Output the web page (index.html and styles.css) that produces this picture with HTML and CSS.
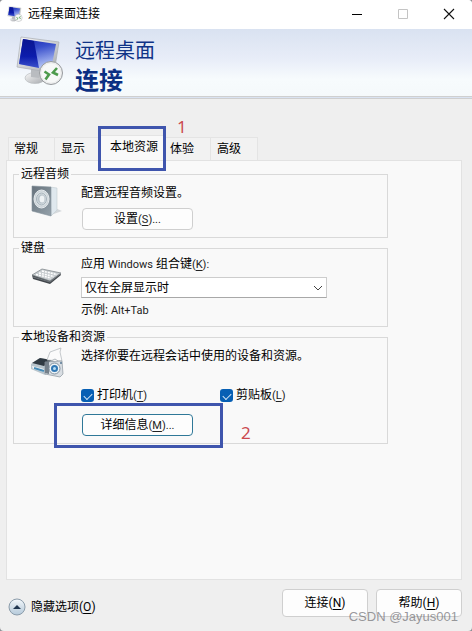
FILE: index.html
```html
<!DOCTYPE html>
<html lang="zh-CN">
<head>
<meta charset="utf-8">
<meta name="viewport" content="width=device-width, initial-scale=1">
<title>远程桌面连接</title>
<link rel="stylesheet" href="styles.css">
</head>
<body>
<svg class="defs" width="0" height="0" aria-hidden="true">
  <defs>
    <linearGradient id="screen" x1="0" y1="0" x2=".3" y2="1">
      <stop offset="0" stop-color="#1726b0"/><stop offset=".4" stop-color="#3a50cc"/>
      <stop offset="1" stop-color="#b4c4f6"/>
    </linearGradient>
    <linearGradient id="glare" x1="0" y1="0" x2="0" y2="1">
      <stop offset="0" stop-color="#0a1590"/><stop offset=".6" stop-color="#0c1cac"/>
      <stop offset="1" stop-color="#3c52cc"/>
    </linearGradient>
    <linearGradient id="metal" x1="0" y1="0" x2="1" y2="1">
      <stop offset="0" stop-color="#fafafa"/><stop offset="1" stop-color="#a5a8ac"/>
    </linearGradient>
    <linearGradient id="box" x1="0" y1="0" x2="1" y2="1">
      <stop offset="0" stop-color="#66727c"/><stop offset="1" stop-color="#94a1aa"/>
    </linearGradient>
    <radialGradient id="cone">
      <stop offset="0" stop-color="#f4f6f7"/><stop offset=".35" stop-color="#aebac2"/>
      <stop offset=".7" stop-color="#e3e8eb"/><stop offset="1" stop-color="#bcc6cc"/>
    </radialGradient>
    <linearGradient id="orb" x1="0" y1="0" x2="0" y2="1">
      <stop offset="0" stop-color="#f5f9fc"/><stop offset=".5" stop-color="#d2dee8"/>
      <stop offset="1" stop-color="#b5cadb"/>
    </linearGradient>
    <symbol id="remote" viewBox="0 0 48 50">
      <ellipse cx="19" cy="42" rx="10" ry="5.5" fill="url(#metal)" stroke="#b4b7bb" stroke-width=".6"/>
      <path d="M15 32l9 2-1 8-8-1z" fill="#b9bcc0"/>
      <path d="M5 1l38 5-5 31L1 31z" fill="url(#metal)" stroke="#a9adb3" stroke-width=".7"/>
      <path d="M7 3l33 5-5 26L3 28z" fill="url(#screen)"/>
      <path d="M7 3l11 2 5 27L3 28z" fill="url(#glare)"/>
      <circle cx="35" cy="37" r="11.5" fill="#eceded" stroke="#96999d" stroke-width="1"/>
      <circle cx="35" cy="37" r="9.6" fill="#fff" opacity=".6"/>
      <path d="M28.500 35.500l4.500 3-3.500 5M41 32l-4 4.500 5 2.500" fill="none" stroke="#4d9a4c" stroke-width="2.600"/>
    </symbol>
  </defs>
</svg>
<main class="window">
  <header class="titlebar">
    <svg width="16" height="16" aria-hidden="true"><use href="#remote"/></svg>
    <span class="title">远程桌面连接</span>
    <button class="caption" aria-label="最小化"><svg width="12" height="12"><path d="M1 6.5h10" stroke="#000"/></svg></button>
    <button class="caption" aria-label="最大化" disabled><svg width="12" height="12"><path d="M1.500 1.500h9v9h-9z" stroke="#c4c4c4" fill="none"/></svg></button>
    <button class="caption" aria-label="关闭"><svg width="12" height="12"><path d="M1 1l10 10M11 1L1 11" stroke="#111" stroke-width="1.100"/></svg></button>
  </header>
  <section class="banner">
    <svg width="48" height="50" aria-hidden="true"><use href="#remote"/></svg>
    <h1><span>远程桌面</span><strong>连接</strong></h1>
  </section>
  <div class="tabs" role="tablist">
    <button role="tab" class="tab">常规</button>
    <button role="tab" class="tab">显示</button>
    <button role="tab" class="tab selected" aria-selected="true">本地资源<span class="mark mark-tab"></span><span class="number number-one">1</span></button>
    <button role="tab" class="tab">体验</button>
    <button role="tab" class="tab">高级</button>
  </div>
  <section class="panel" role="tabpanel">
    <fieldset class="group audio">
      <legend>远程音频</legend>
      <div class="row">
        <svg class="icon" width="32" height="32" aria-hidden="true">
          <path d="M20 30l11-4-7-3z" fill="#d5d9dc"/>
          <path d="M19 2l7 1v22l-6 6z" fill="#dfe8ee" stroke="#c2ccd2" stroke-width=".6"/>
          <path d="M1 1l19 1v29L1 26z" fill="url(#box)" stroke="#83909a" stroke-width=".6"/>
          <ellipse cx="10.5" cy="14" rx="7.500" ry="9" fill="url(#cone)" stroke="#e8edf0"/>
          <ellipse cx="10.5" cy="14" rx="5" ry="6" fill="none" stroke="#a6b3bb"/>
          <ellipse cx="11" cy="14" rx="2.500" ry="3.500" fill="#eef2f4"/>
        </svg>
        <div class="fields">
          <p>配置远程音频设置。</p>
          <button class="button">设置<span class="latin">(<u>S</u>)...</span></button>
        </div>
      </div>
    </fieldset>
    <fieldset class="group keyboard">
      <legend>键盘</legend>
      <div class="row">
        <svg class="icon" width="32" height="18" aria-hidden="true">
          <path d="M1 7l1 4 17 5 11-9-1-2z" fill="#41464b"/>
          <path d="M1 7L11 1l19 4-11 8z" fill="#c8cdd0" stroke="#777e83" stroke-width=".7"/>
          <path d="M5 6.500l15 3.500M8 5l15 3.500M11 3l15 3.500" stroke="#fff" stroke-width="1.500" stroke-dasharray="2 1"/>
          <path d="M2 9l17 5 10-8" fill="none" stroke="#858b90" stroke-width=".7"/>
        </svg>
        <div class="fields">
          <label for="keys">应用 <span class="latin">Windows</span> 组合键<span class="latin">(<u>K</u>):</span></label>
          <div class="select">
            <select id="keys"><option>仅在全屏显示时</option></select>
            <svg width="10" height="6" aria-hidden="true"><path d="M1 1l4 4 4-4" fill="none" stroke="#444"/></svg>
          </div>
          <p>示例: <span class="latin">Alt+Tab</span></p>
        </div>
      </div>
    </fieldset>
    <fieldset class="group devices">
      <legend>本地设备和资源</legend>
      <div class="row">
        <svg class="icon" width="32" height="30" aria-hidden="true">
          <path d="M0 16l9-6 14 3v9l-9 5L0 21z" fill="#b9c5cc"/>
          <path d="M1 15l8-5 12 2-8 6z" fill="#303a42"/>
          <path d="M1 18l12 3v3L2 21z" fill="#f5f8fa"/>
          <path d="M3 20l10 3" stroke="#468bb6" stroke-width="2"/>
          <path d="M16 12l3-8 11-4-1 4 2 9z" fill="#fbfbfb" stroke="#aeb3b8" stroke-width=".7"/>
          <path d="M14 14l17-1 1 13-3 3-15-3z" fill="#d9dee3" stroke="#8c969f" stroke-width=".7"/>
          <path d="M14 14h4v12l-4-1z" fill="#75808a"/>
          <path d="M20 13l4-2 3 2" fill="#f4f4f4" stroke="#939ca4" stroke-width=".7"/>
          <circle cx="23.500" cy="20.500" r="5.500" fill="#eef3f6" stroke="#80919f"/>
          <circle cx="23.500" cy="20.500" r="3.500" fill="#3179b5"/>
          <circle cx="23.500" cy="20.500" r="1.500" fill="#b6dcf4"/>
          <circle cx="30" cy="15" r="1" fill="#587895"/>
        </svg>
        <div class="fields">
          <p>选择你要在远程会话中使用的设备和资源。</p>
          <div class="checks">
            <label><input type="checkbox" checked><span>打印机<span class="latin">(<u>T</u>)</span></span></label>
            <label><input type="checkbox" checked><span>剪贴板<span class="latin">(<u>L</u>)</span></span></label>
          </div>
          <button class="button focused">详细信息<span class="latin">(<u>M</u>)...</span><span class="mark mark-details"></span><span class="number number-two">2</span></button>
        </div>
      </div>
    </fieldset>
  </section>
  <footer class="footer">
    <button class="collapse">
      <svg width="18" height="18" aria-hidden="true"><circle cx="9" cy="9" r="8" fill="url(#orb)" stroke="#8a9ba9"/><path d="M5 11l4-4 4 4z" fill="#203650"/></svg>
      <span>隐藏选项(<u>O</u>)</span>
    </button>
    <button class="action">连接(<u>N</u>)</button>
    <button class="action">帮助(<u>H</u>)</button>
    <span class="watermark">CSDN @Jayus001</span>
  </footer>
</main>
</body>
</html>
```

FILE: styles.css
```css
* { box-sizing: border-box; }

body {
  margin: 0;
  background: #8d8f94;
  color: #000;
  font: 12px/16px Roboto, "Noto Sans CJK SC", sans-serif;
}

button, select, input { font: inherit; color: inherit; }
button { padding: 0; border: 0; background: none; }
h1, p { margin: 0; font-weight: 400; }
svg { display: block; flex: none; }
u { text-underline-offset: 2px; }
.defs { position: absolute; }
.latin { font-size: 11px; color: #222; }

.window {
  display: flex;
  flex-direction: column;
  min-height: 100vh;
  background: #efefef;
  border-radius: 4px;
  overflow: hidden;
}

.titlebar {
  display: flex;
  align-items: center;
  height: 29px;
  padding: 0 0 2px 7px;
  background: #fff;
}
.title { flex: 1; padding-left: 5px; }
.caption {
  display: flex;
  align-items: center;
  justify-content: center;
  width: 46px;
  height: 26px;
}

.banner {
  display: flex;
  gap: 11px;
  height: 70px;
  padding: 7px 16px 0;
  background: linear-gradient(#d9e2f1, #e8edf8 45%, #f7fbfd 75%, #f5f9fb);
  border-bottom: 3px double #cfcfcf;
}
.banner h1 { color: #0f3387; }
.banner span, .banner strong { display: block; }
.banner span { font-size: 20px; line-height: 30px; }
.banner strong { color: #0b2f83; font-size: 24px; line-height: 30px; }

.tabs {
  display: flex;
  align-items: flex-end;
  padding: 36px 8px 0;
}
.tab {
  height: 23px;
  padding: 0 16px 0 6px;
  border: 1px solid #e4e4e4;
  border-bottom: 0;
  border-left-width: 0;
  background: #f2f2f2;
}
.tab:first-child { padding-left: 5px; border-left-width: 1px; }
.tab.selected {
  position: relative;
  height: 25px;
  margin: 0 -1px 0 -3px;
  padding: 0 6px 3px 11px;
  background: #f9f9f9;
}

.panel {
  display: flex;
  flex: 1;
  flex-direction: column;
  gap: 3px;
  margin: 0 10px 0 6px;
  padding: 6px;
  background: #f9f9f9;
  border: 1px solid #e2e2e2;
}
.group {
  width: 100%;
  max-width: 375px;
  min-width: 0;
  margin: 0;
  padding: 0 5px 7px;
  border: 1px solid #d9d9d9;
}
.group legend { padding: 0 2px; line-height: 14px; }
.row { display: flex; gap: 18px; padding-left: 12px; }
.icon { margin-top: 4px; overflow: visible; }
.fields { display: flex; flex: 1; flex-direction: column; align-items: flex-start; }
.audio .fields { gap: 7px; padding-top: 4px; }
.keyboard .fields { gap: 4px; padding-top: 1px; }
.keyboard .icon { margin-top: 13px; }
.devices .fields { gap: 10px; padding-top: 4px; }
.devices .checks { padding-top: 13px; }

.button {
  position: relative;
  width: 111px;
  height: 22px;
  margin-left: 1px;
  background: #fdfdfd;
  border: 1px solid #cfcfcf;
  border-radius: 4px;
}
.button.focused { border-color: #2f7898; }

.select { position: relative; width: 100%; max-width: 246px; }
.select select {
  display: block;
  width: 100%;
  height: 21px;
  padding: 0 24px 0 3px;
  background: #fff;
  border: 1px solid #cdcdcd;
  border-bottom-color: #a8a8a8;
  border-radius: 0;
  appearance: none;
}
.select svg { position: absolute; top: 8px; right: 4px; pointer-events: none; }

.checks { display: grid; grid-template-columns: 139px auto; }
.checks label { display: flex; align-items: center; gap: 3px; }
.checks input {
  width: 13px;
  height: 13px;
  margin: 0;
  appearance: none;
  background: #075fb4;
  border-radius: 3px;
}
.checks input::before {
  content: "";
  display: block;
  width: 7px;
  height: 4px;
  margin: 4px 3px;
  border: solid #d4e6f6;
  border-width: 0 0 1px 1px;
  transform: rotate(-45deg);
}

.footer {
  position: relative;
  display: flex;
  align-items: flex-start;
  gap: 8px;
  height: 51px;
  padding: 9px 10px 0 8px;
}
.collapse { display: flex; align-items: center; gap: 5px; height: 36px; margin-right: auto; }
.action {
  width: 86px;
  height: 28px;
  background: #fdfdfd;
  border: 1px solid #cfcfcf;
  border-radius: 4px;
}

.mark { position: absolute; border: 3px solid #3f55ad; pointer-events: none; }
.mark-tab { left: -1px; top: -10px; width: 68px; height: 45px; z-index: 1; }
.mark-details { left: -29px; top: -12px; width: 169px; height: 45px; }
.number {
  position: absolute;
  color: #cb4a50;
  font: 17px/20px "Noto Sans", sans-serif;
}
.number-one { left: 78px; top: -19px; }
.number-two { left: 158px; top: 8px; }

.watermark {
  position: absolute;
  right: 14px;
  bottom: 6px;
  color: rgba(110, 110, 115, 0.7);
  font: 13px/16px "Liberation Sans", sans-serif;
  pointer-events: none;
}
```
